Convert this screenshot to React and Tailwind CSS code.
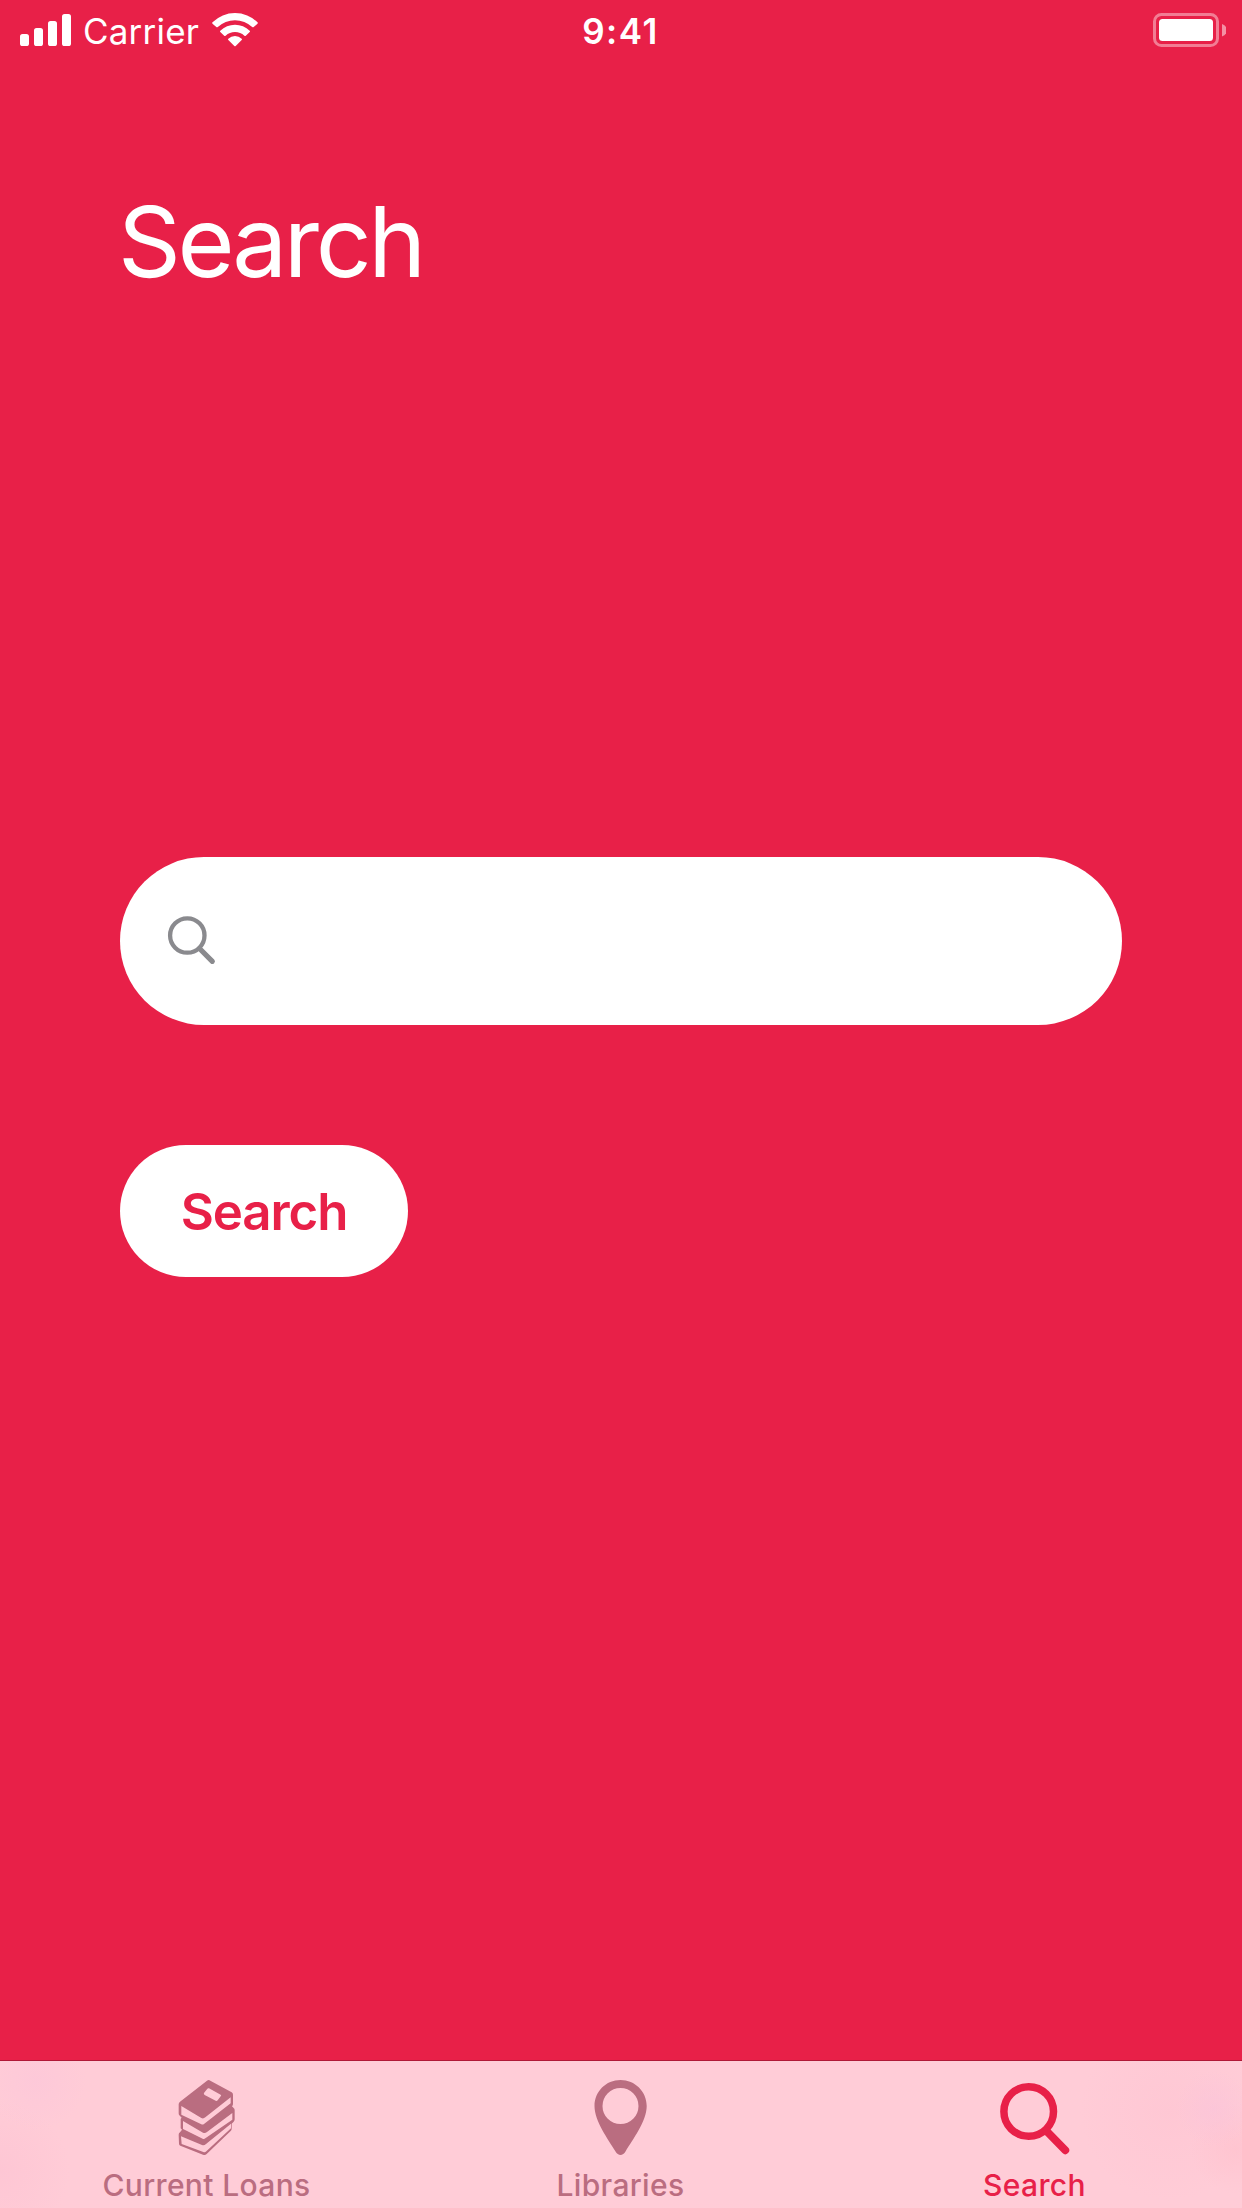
function SignalIcon() {
  return (
    <svg className="h-8 w-[51px]" viewBox="0 0 51 32" fill="#fff">
      <rect x="0" y="20" width="9" height="12" rx="2.6" />
      <rect x="14" y="14" width="9" height="18" rx="2.6" />
      <rect x="28" y="7" width="9" height="25" rx="2.6" />
      <rect x="42" y="0" width="9" height="32" rx="2.6" />
    </svg>
  );
}

function WifiIcon() {
  return (
    <svg className="h-[34px] w-[46px]" viewBox="0 0 46 34" fill="#fff">
      <path d="M.5 9.3a32 32 0 0 1 45 0q.6.7 0 1.400L41.700 14q-.7.7-1.500 0a25 25 0 0 0-34.400 0q-.8.7-1.500 0L.5 10.700q-.6-.7 0-1.400Z" />
      <path d="M8.300 17.700a21 21 0 0 1 29.400 0q.7.7 0 1.400L33.800 22.700q-.7.6-1.400 0a14 14 0 0 0-18.800 0q-.7.6-1.400 0L8.300 19.100q-.7-.7 0-1.400Z" />
      <path d="M16.300 25.700a10 10 0 0 1 13.400 0q.7.700 0 1.400L23.700 33q-.7.600-1.400 0L16.300 27.100q-.7-.7 0-1.400Z" />
    </svg>
  );
}

function BatteryIcon() {
  return (
    <svg className="h-[34px] w-[73px]" viewBox="0 0 73 34">
      <rect x="1.500" y="1.500" width="63" height="31" rx="7" fill="none" stroke="#fff" strokeOpacity=".42" strokeWidth="3" />
      <rect x="6" y="6" width="54" height="22" rx="3.500" fill="#fff" />
      <path d="M69 11a6.500 6.500 0 0 1 0 12.500Z" fill="#fff" fillOpacity=".5" />
    </svg>
  );
}

function BooksIcon() {
  return (
    <svg className="h-20 w-[60px]" viewBox="0 0 180 240" fill="#ba6d80">
      <path d="M93 8Q98 4 103 8L167 43Q171 46 171 50V78Q171 82 168 85L175 92Q176 94 176 97V124Q176 128 173 131L167 137V152Q167 156 164 159L92 228Q87 233 81 230L13 203Q9 201 9 197L8 170Q8 166 12 163L18 155L14 151V124Q14 121 17 119L10 112Q8 110 8 106V79Q8 74 12 71Z" />
      <g fill="#ffccd7">
        <path d="M94 32Q96 30 99 31L134 50Q137 52 134 55L125 67Q122 70 119 68L86 51Q82 48 84 45Z" />
        <path d="M16 84L76 120Q82 123 88 118L164 58V76L84 138Q80 141 76 139L16 110Z" />
        <path d="M21 129L81 164Q87 167 93 162L169 105V125L88 181Q84 184 80 182L21 153Z" />
        <path d="M15 175L78 201Q84 204 90 198L165 137V151L91 220Q87 224 82 222L17 198Z" />
      </g>
    </svg>
  );
}

function PinIcon() {
  return (
    <svg className="h-20 w-[60px]" viewBox="0 0 60 80" fill="#ba6d80">
      <path
        fillRule="evenodd"
        d="M30.500 2C45 2 56.700 13.500 56.700 28C56.700 43 43 61 35.500 73.500C33 78 28 78 25.500 73.500C18 61 4.500 43 4.500 28C4.500 13.500 16 2 30.500 2ZM30.500 10a18 18 0 1 0 0 36a18 18 0 1 0 0-36Z"
      />
    </svg>
  );
}

function TabSearchIcon() {
  return (
    <svg className="h-20 w-[72px]" viewBox="0 0 72 80" fill="none" stroke="#e82048">
      <circle cx="30.700" cy="33.500" r="24.800" strokeWidth="7.500" />
      <path d="M48.500 53L67.300 72.300" strokeWidth="7.800" strokeLinecap="round" />
    </svg>
  );
}

function FieldSearchIcon() {
  return (
    <svg className="mb-[2px] h-[50px] w-[50px]" viewBox="0 0 50 50" fill="none" stroke="#8a8a8e">
      <circle cx="20.300" cy="20.500" r="17.200" strokeWidth="4.300" />
      <path d="M32.500 33.500L45.300 46.300" strokeWidth="5.200" strokeLinecap="round" />
    </svg>
  );
}

function Tab({ icon, label, active }) {
  return (
    <button className="flex flex-1 flex-col items-center pt-[17px]">
      <span className="mr-[2px] block">{icon}</span>
      <span
        className={
          "mr-[1px] mt-[9px] whitespace-nowrap text-[30px] font-medium leading-[36px] tracking-[0.35px] " +
          (active ? "text-[#e82048]" : "text-[#ba6d80]")
        }
      >
        {label}
      </span>
    </button>
  );
}

export default function App() {
  return (
    <div className="flex h-[2208px] w-[1242px] flex-col overflow-hidden bg-[#e82048] font-['Inter',sans-serif] text-white">
      <header className="flex h-[60px] items-start justify-between pl-5 pr-[16px]">
        <div className="flex w-[300px] items-start">
          <div className="pt-[14px]"><SignalIcon /></div>
          <span className="ml-[12px] mt-[8px] w-[117px] whitespace-nowrap text-[35px] font-normal leading-[46px] tracking-[0.2px]">Carrier</span>
          <div className="ml-[12px] pt-[13px]"><WifiIcon /></div>
        </div>
        <span className="mr-[5px] mt-[8px] whitespace-nowrap text-[35px] font-semibold leading-[46px] tracking-[1.5px]">9:41</span>
        <div className="flex w-[300px] justify-end pt-[13px]"><BatteryIcon /></div>
      </header>

      <main className="flex flex-1 flex-col items-start px-[120px]">
        <h1 className="-ml-[2px] mt-[122px] h-[120px] whitespace-nowrap text-[98px] leading-[120px] tracking-[-3.4px]">Search</h1>
        <div className="mt-[555px] flex h-[168px] w-full items-center rounded-full bg-white pl-[47px]">
          <FieldSearchIcon />
          <input aria-label="Search" className="ml-4 h-full flex-1 bg-transparent pr-12 text-[48px] text-black outline-none" />
        </div>
        <button className="mt-[120px] flex h-[132px] w-[288px] items-center justify-center rounded-full bg-white pt-[2px] text-[51px] font-semibold tracking-[-1.1px] text-[#e82048]">
          Search
        </button>
      </main>

      <nav className="flex h-[148px] border-t border-[#b01837] bg-[#ffccd7] bg-[radial-gradient(circle_at_36px_20px,#fcc6da99_0,#fcc6da00_50px),radial-gradient(circle_at_0px_110px,#fdc2d299_0,#fdc2d200_70px),radial-gradient(circle_at_1214px_48px,#fac3da99_0,#fac3da00_38px),radial-gradient(circle_at_1236px_88px,#ffc0cc99_0,#ffc0cc00_45px),radial-gradient(circle_at_1170px_50px,#fec4d299_0,#fec4d200_90px)]">
        <Tab icon={<BooksIcon />} label="Current Loans" />
        <Tab icon={<PinIcon />} label="Libraries" />
        <Tab icon={<TabSearchIcon />} label="Search" active />
      </nav>
    </div>
  );
}
